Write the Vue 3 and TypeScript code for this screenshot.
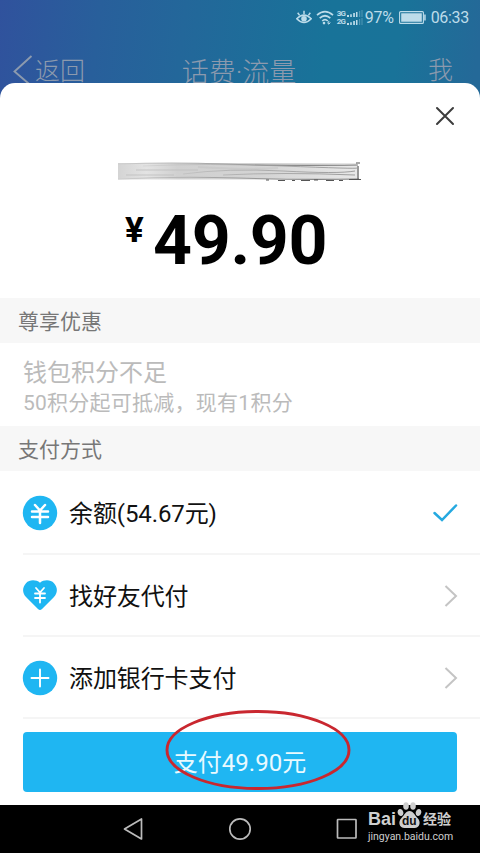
<script setup lang="ts">
interface Method {
  id: string
  icon: 'coin' | 'heart' | 'plus'
  label: string
}

const methods: Method[] = [
  { id: 'balance', icon: 'coin', label: '余额(54.67元)' },
  { id: 'friend', icon: 'heart', label: '找好友代付' },
  { id: 'card', icon: 'plus', label: '添加银行卡支付' },
]
const selected = 'balance'
</script>

<template>
  <div class="screen">
    <header class="top">
      <div class="status">
        <svg class="eye" width="16" height="15" viewBox="0 0 16 15" fill="none" stroke="currentColor">
          <path d="M.8 8.7Q8 1.6 15.2 8.7Q8 16.4.8 8.7Z" stroke-width="1.6" />
          <path d="M8 4V.8M3.6 5.4L1.7 2.7M12.4 5.4L14.3 2.7" stroke-width="1.5" />
          <circle cx="8" cy="8.8" r="2.8" fill="currentColor" stroke="none" />
        </svg>
        <svg class="wifi" width="18" height="15" viewBox="0 0 18 15" fill="none" stroke="currentColor" stroke-width="1.7">
          <path d="M1 5.2Q9-1.8 17 5.2M3.7 8.2Q9 3.3 14.3 8.2M6.2 11Q9 8.3 11.8 11" />
          <circle cx="8" cy="13.1" r="1.3" fill="currentColor" stroke="none" />
          <path d="M12.8 11v3M11.2 12.6l1.6 1.6 1.6-1.6" stroke-width="1" />
        </svg>
        <div class="signals">
          <div v-for="net in ['3G', '2G']" :key="net" class="signal">
            <span>{{ net }}</span>
            <svg width="17" height="7" viewBox="0 0 17 7" fill="currentColor">
              <path d="M1 5h2v2H1zM4.2 4.2h1.6V7H4.2zM7.2 3h1.7v4H7.2zM10 2h1.5v5H10z" />
              <path d="M13 1h1.2v6H13zM15.5 0h1v7h-1z" opacity=".35" />
            </svg>
          </div>
        </div>
        <span class="percent">97%</span>
        <svg class="battery" width="27" height="13" viewBox="0 0 27 13">
          <rect x=".6" y=".6" width="23.8" height="11.8" rx="1" fill="none" stroke="currentColor" stroke-width="1.1" />
          <path d="M2.2 2.2h20.6v8.600H2.200zM25.200 3.500h1.500v6h-1.500z" fill="currentColor" />
        </svg>
        <span class="time">06:33</span>
      </div>
      <div class="titlebar">
        <div class="back">
          <svg width="20" height="32" viewBox="0 0 20 32" fill="none" stroke="currentColor" stroke-width="1.9">
            <path d="M18.500 1L1.500 16.500L18.500 31" />
          </svg>
          <span>返回</span>
        </div>
        <div class="title">话费·流量</div>
        <div class="me">我</div>
      </div>
    </header>

    <main class="sheet">
      <div class="summary">
        <svg class="close" width="20" height="20" viewBox="0 0 20 20" fill="none" stroke="#3c3c3c" stroke-width="2" stroke-linecap="round">
          <path d="M2 2L18 18M18 2L2 18" />
        </svg>
        <svg class="smudge" width="244" height="22" viewBox="0 0 244 22" fill="none">
          <defs>
            <linearGradient id="smear">
              <stop offset="0" stop-color="#d4d4d4" />
              <stop offset=".12" stop-color="#e3e3e3" />
              <stop offset=".25" stop-color="#d0d0d0" />
              <stop offset=".6" stop-color="#d4d4d4" />
              <stop offset="1" stop-color="#e8e8e8" />
            </linearGradient>
            <linearGradient id="edge">
              <stop offset="0" stop-color="#cfcfcf" />
              <stop offset=".45" stop-color="#a2a2a2" />
              <stop offset="1" stop-color="#777" />
            </linearGradient>
          </defs>
          <path d="M0 2H239V18.500H0Z" fill="url(#smear)" />
          <path d="M0 3Q55 1 105 3T240 4M0 18Q60 15 120 17T241 18" stroke="url(#edge)" stroke-width="1.1" />
          <path d="M25 5Q90 2 165 5T239 7M65 13Q110 7 165 10T237 10M105 14Q165 11 237 14" stroke="url(#edge)" stroke-width=".9" opacity=".75" />
          <path d="M18 9H80M8 14H56M80 6Q126 9 160 7" stroke="#bdbdbd" stroke-width="2" opacity=".4" />
          <path d="M238 2h4M240 5v13M148 19h3M160 19.500h7M174 19.500h3M183 19.500h9M196 19h4M208 19.500h8M221 19.500h4M231 18.500h12" stroke="#555" stroke-width="1.2" />
        </svg>
        <div class="amount"><span class="yen">¥</span><span class="value">49.90</span></div>
      </div>
      <h2 class="section">尊享优惠</h2>
      <div class="points">
        <div class="points-title">钱包积分不足</div>
        <div class="points-note">50积分起可抵减，现有1积分</div>
      </div>
      <h2 class="section">支付方式</h2>
      <ul class="methods">
        <li v-for="m in methods" :key="m.id" class="method">
          <svg v-if="m.icon === 'coin'" width="34" height="36" viewBox="0 0 34 36" fill="none" stroke="#fff" stroke-linecap="round">
            <circle cx="17" cy="18" r="17.2" fill="#1fb6f2" stroke="none" />
            <path d="M12 10L17 15.500L22 10M9 16.500H25M9 22H25M17 16V28" stroke-width="2.5" />
          </svg>
          <svg v-else-if="m.icon === 'heart'" width="34" height="36" viewBox="0 0 34 36" fill="none" stroke="#fff" stroke-linecap="round">
            <path d="M17 4.800C21 1.500 27.500 1.500 31 5.200C35 9.500 34.700 15 31 19L19 31Q17 32.800 15 31L3 19C-.7 15-1 9.500 3 5.200C6.500 1.500 13 1.500 17 4.800Z" fill="#1fb6f2" stroke="none" />
            <path d="M13 10L17 14.500L21 10M12 15.500H22M12 20H22M17 15V24.500" stroke-width="1.8" />
          </svg>
          <svg v-else width="34" height="36" viewBox="0 0 34 36" fill="none" stroke="#fff" stroke-linecap="round">
            <circle cx="17" cy="18" r="17.2" fill="#1fb6f2" stroke="none" />
            <path d="M8.500 18H25.500M17 9.500V26.500" stroke-width="1.9" />
          </svg>
          <span class="label">{{ m.label }}</span>
          <svg v-if="m.id === selected" width="26" height="20" viewBox="0 0 26 20" fill="none" stroke="#25a9e0" stroke-width="2.5" stroke-linecap="round">
            <path d="M2.500 10L10 17L24 2.500" />
          </svg>
          <svg v-else width="14" height="24" viewBox="0 0 14 24" fill="none" stroke="#c4c4c4" stroke-width="2">
            <path d="M1.500 2L12 12L1.500 22" />
          </svg>
        </li>
      </ul>
      <div class="action">
        <button class="pay" type="button">支付49.90元</button>
        <svg class="mark" width="186" height="82" viewBox="0 0 186 82" fill="none">
          <ellipse cx="93" cy="41" rx="91" ry="38.5" stroke="#c9272f" stroke-width="2.9" />
        </svg>
      </div>
    </main>

    <footer class="nav">
      <svg class="keys" width="240" height="24" viewBox="0 0 240 24" fill="none" stroke="#bbb" stroke-width="1.7" stroke-linejoin="round">
        <path d="M4.500 12L21.500 2V22Z" />
        <circle cx="120" cy="12" r="10.2" />
        <rect x="217.5" y="2.5" width="18.5" height="18.5" rx=".5" />
      </svg>
      <div class="watermark">
        <div class="brand">
          <span class="bai">Bai</span>
          <span class="paw">
            <svg width="25" height="28" viewBox="0 0 24 28" fill="#cfcfcf">
              <ellipse cx="3" cy="11.5" rx="2.8" ry="3.5" transform="rotate(-15 3 11.500)" />
              <ellipse cx="8.5" cy="5" rx="2.8" ry="3.8" />
              <ellipse cx="15.5" cy="5" rx="2.8" ry="3.8" />
              <ellipse cx="21" cy="11.5" rx="2.7" ry="3.5" transform="rotate(15 21 11.500)" />
              <path d="M12 10C16 10 17 14 20 17C24 21 22 27 17 27H7C2 27 0 21 4 17C7 14 8 10 12 10Z" />
            </svg>
            <b>du</b>
          </span>
          <span class="jy">经验</span>
        </div>
        <div class="site">jingyan.baidu.com</div>
      </div>
    </footer>
  </div>
</template>

<style>
body { margin: 0; background: #000; }
</style>

<style scoped>
.screen {
  width: 480px;
  height: 853px;
  overflow: hidden;
  display: flex;
  flex-direction: column;
  font-family: Roboto, "Noto Sans CJK SC", sans-serif;
  background: linear-gradient(97deg, #30529d 0, #285f9b 100px, #23679a 185px, #187399 330px, #197399 400px, #246998 480px);
}
.top { height: 83px; flex: none; }
.status {
  height: 34px;
  box-sizing: border-box;
  padding: 0 11px 0 0;
  display: flex;
  align-items: center;
  justify-content: flex-end;
  color: #bddcea;
  font-size: 16px;
}
.wifi { margin-left: 4px; }
.signals { margin-left: 3px; display: flex; flex-direction: column; gap: 1px; }
.signal { display: flex; align-items: center; height: 7px; font-size: 8px; font-weight: 700; line-height: 7px; }
.signal span { width: 9px; letter-spacing: -0.9px; }
.percent { margin-left: 2px; letter-spacing: -0.3px; }
.battery { margin-left: 5px; }
.time { margin-left: 5px; letter-spacing: -0.3px; }
.titlebar {
  height: 49px;
  padding: 0 27px 0 13px;
  display: grid;
  grid-template-columns: 1fr auto 1fr;
  align-items: start;
  font-weight: 300;
  color: #8c9aae;
}
.back { display: flex; align-items: center; gap: 2px; padding-top: 20px; font-size: 25px; line-height: 32px; }
.back span { padding-top: 2px; }
.title { padding: 21px 0 0 12px; font-size: 27px; line-height: 36px; }
.me { padding-top: 19px; font-size: 25px; line-height: 36px; text-align: right; }
.sheet {
  height: 722px;
  flex: none;
  background: #fff;
  border-radius: 15px 15px 0 0;
}
.summary {
  height: 215px;
  box-sizing: border-box;
  padding: 23px 25px 0 118px;
  display: flex;
  flex-direction: column;
}
.close { align-self: flex-end; flex: none; }
.smudge { margin-top: 35px; flex: none; }
.amount { display: flex; align-items: flex-start; margin: 35px 0 0 7px; color: #000; font-weight: 700; }
.yen { width: 28px; font-size: 35px; line-height: 35px; margin-top: -5px; }
.value { font-size: 68px; line-height: 80px; margin-top: -17px; letter-spacing: -0.3px; }
.section {
  height: 45px;
  box-sizing: border-box;
  margin: 0;
  padding: 2px 0 0 18px;
  background: #f7f7f7;
  font-size: 21px;
  line-height: 45px;
  font-weight: 400;
  color: #777;
}
.points { height: 83px; box-sizing: border-box; padding: 15px 23px 0; color: #bbb; }
.points-title { font-size: 24px; line-height: 31px; }
.points-note { font-size: 21px; line-height: 28px; letter-spacing: 0.25px; }
.methods { list-style: none; margin: 0; padding: 2px 0 0; }
.method {
  height: 82px;
  box-sizing: border-box;
  margin-left: 23px;
  padding-right: 22px;
  display: flex;
  align-items: center;
  border-bottom: 2px solid #f5f5f5;
}
.method + .method { padding-top: 2px; }
.method svg { overflow: visible; flex: none; }
.label { flex: 1; margin: 2px 0 0 12px; font-size: 24px; line-height: 36px; letter-spacing: -0.1px; color: #111; }
.action { position: relative; padding: 13px 23px; }
.pay {
  display: block;
  width: 100%;
  height: 60px;
  padding: 2px 0 0;
  border: 0;
  border-radius: 4px;
  background: #1fb6f2;
  color: #e9faff;
  font-family: inherit;
  font-size: 24px;
  line-height: 58px;
}
.mark { position: absolute; left: 165px; top: -10px; }
.nav { position: relative; display: flex; align-items: flex-start; height: 48px; flex: none; background: #000; }
.keys { display: block; margin: 12px auto 0; }
.watermark { position: absolute; left: 368px; top: -4px; color: #cfcfcf; }
.brand { display: flex; align-items: flex-end; height: 28px; }
.bai { font: 700 18px/20px "Liberation Sans", sans-serif; width: 29px; }
.paw { position: relative; width: 26px; height: 28px; }
.paw b { position: absolute; left: 5px; top: 14px; color: #111; font: 700 12px/12px "Liberation Sans", sans-serif; }
.jy { font-size: 14px; font-weight: 700; line-height: 20px; }
.site { font: 10.500px/14px Roboto, sans-serif; margin-top: 1px; white-space: nowrap; }
</style>
